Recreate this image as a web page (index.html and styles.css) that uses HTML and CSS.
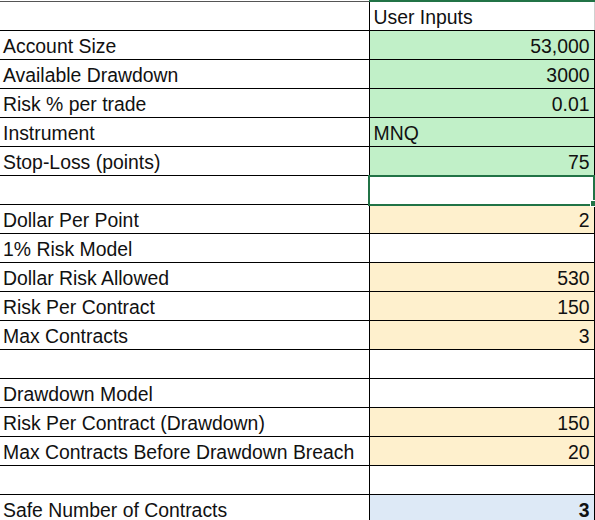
FILE: index.html
```html
<!DOCTYPE html>
<html>
<head>
<meta charset="utf-8">
<link rel="stylesheet" href="styles.css">
</head>
<body>
<table class="sheet">
  <colgroup><col class="col-a"><col class="col-b"></colgroup>
  <tr class="head"><td class="label"></td><td class="val txt top-green">User Inputs</td></tr>
  <tr><td class="label">Account Size</td><td class="val green">53,000</td></tr>
  <tr><td class="label">Available Drawdown</td><td class="val green">3000</td></tr>
  <tr><td class="label">Risk % per trade</td><td class="val green">0.01</td></tr>
  <tr><td class="label">Instrument</td><td class="val green txt">MNQ</td></tr>
  <tr><td class="label">Stop-Loss (points)</td><td class="val green">75</td></tr>
  <tr><td class="label"></td><td class="val selected"></td></tr>
  <tr><td class="label">Dollar Per Point</td><td class="val gold">2</td></tr>
  <tr><td class="label">1% Risk Model</td><td class="val"></td></tr>
  <tr><td class="label">Dollar Risk Allowed</td><td class="val gold">530</td></tr>
  <tr><td class="label">Risk Per Contract</td><td class="val gold">150</td></tr>
  <tr><td class="label">Max Contracts</td><td class="val gold">3</td></tr>
  <tr><td class="label"></td><td class="val"></td></tr>
  <tr><td class="label">Drawdown Model</td><td class="val"></td></tr>
  <tr><td class="label">Risk Per Contract (Drawdown)</td><td class="val gold">150</td></tr>
  <tr><td class="label">Max Contracts Before Drawdown Breach</td><td class="val gold">20</td></tr>
  <tr><td class="label"></td><td class="val"></td></tr>
  <tr><td class="label">Safe Number of Contracts</td><td class="val blue bold">3</td></tr>
</table>
</body>
</html>
```

FILE: styles.css
```css
html, body {
  margin: 0;
  padding: 0;
  background: #ffffff;
  overflow: hidden;
}
body {
  font-family: "Liberation Sans", Arial, sans-serif;
  font-size: 19.4px;
  color: #111111;
}
.sheet {
  border-collapse: collapse;
  table-layout: fixed;
  width: 594px;
  border-top: 1px solid #555555;
}
.col-a { width: 369px; }
.col-b { width: 225px; }
.sheet td {
  height: 28px;
  padding: 0;
  border-bottom: 1px solid #000000;
  white-space: nowrap;
  overflow: visible;
  vertical-align: bottom;
  line-height: 25px;
}
.label {
  padding-left: 3px !important;
  border-right: 1px solid #000000;
}
.val {
  text-align: right;
  padding-right: 4px !important;
  border-right: 1px solid #000000;
}
.txt {
  text-align: left;
  padding-left: 4px !important;
}
.head .val { border-right: 1px solid #d0d0d0; }
.top-green { border-top: 2px solid #217346; }
.green { background: #c1f0c8; }
.gold { background: #fef0cd; }
.blue { background: #dde9f6; }
.bold { font-weight: bold; }
.selected {
  position: relative;
  outline: 2px solid #217346;
  outline-offset: -1px;
}
.selected::after {
  content: "";
  position: absolute;
  right: -3px;
  bottom: -3px;
  width: 5px;
  height: 5px;
  background: #217346;
  border: 1px solid #ffffff;
}
```
